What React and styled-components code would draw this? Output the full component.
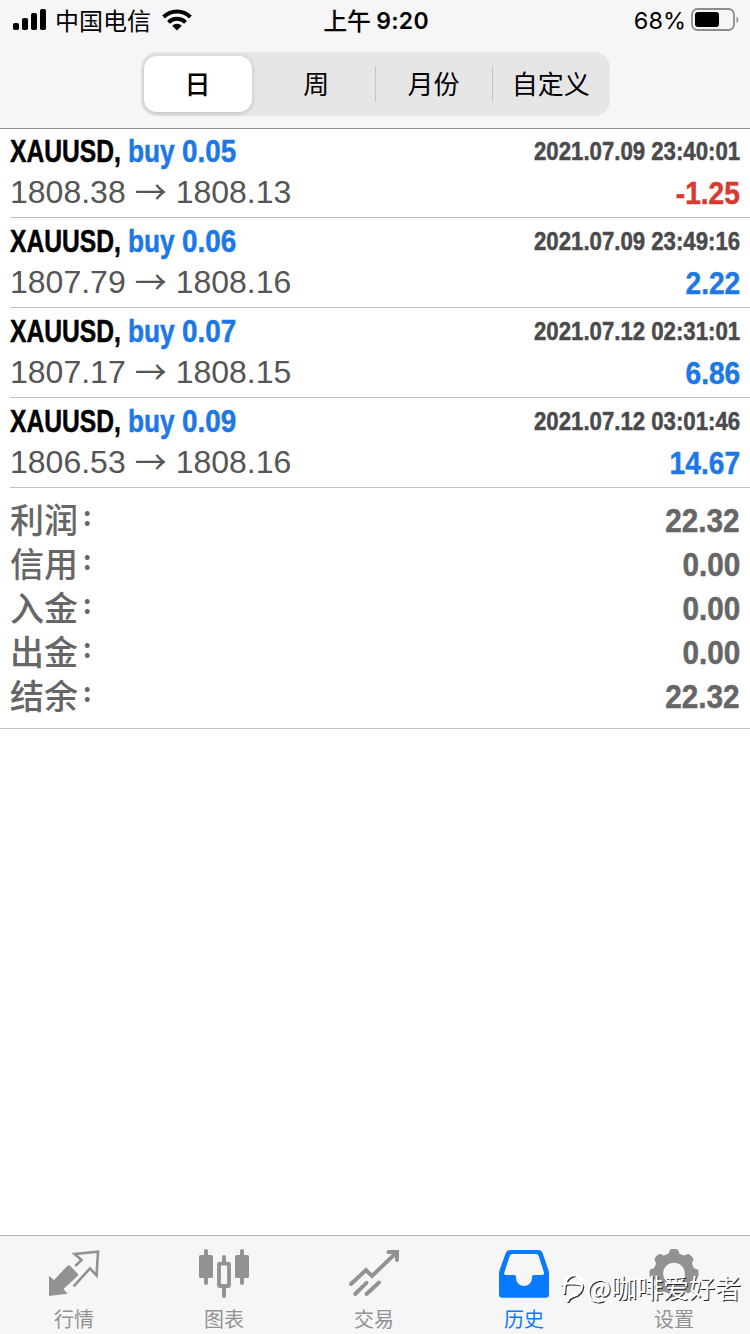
import React from 'react';
import styled, { createGlobalStyle } from 'styled-components';

const deals = [
  { symbol: 'XAUUSD', side: 'buy', volume: '0.05', open: '1808.38', close: '1808.13', time: '2021.07.09 23:40:01', profit: '-1.25' },
  { symbol: 'XAUUSD', side: 'buy', volume: '0.06', open: '1807.79', close: '1808.16', time: '2021.07.09 23:49:16', profit: '2.22' },
  { symbol: 'XAUUSD', side: 'buy', volume: '0.07', open: '1807.17', close: '1808.15', time: '2021.07.12 02:31:01', profit: '6.86' },
  { symbol: 'XAUUSD', side: 'buy', volume: '0.09', open: '1806.53', close: '1808.16', time: '2021.07.12 03:01:46', profit: '14.67' },
];

const totals = [
  ['利润', '22.32'],
  ['信用', '0.00'],
  ['入金', '0.00'],
  ['出金', '0.00'],
  ['结余', '22.32'],
];

const periods = ['日', '周', '月份', '自定义'];

const QuotesIcon = () => (
  <TabIcon viewBox='0 0 54 52'>
    <path d='M2 28L7 32L20.5 17.8Q21.8 16.6 23 17.8L30.6 25.6Q31.6 26.8 30.6 28L16.5 41L20.5 45.8L2 48Z' fill='currentColor' />
    <path d='M28.3 18L34.5 12L27.6 6L51 3.6L49.6 27.4L43 20.4L26.6 38.4' fill='none' stroke='currentColor' strokeWidth='2.6' />
  </TabIcon>
);

const ChartIcon = () => (
  <TabIcon viewBox='0 0 54 52'>
    <path d='M9 3V35M45 3V35M27 9V15M27 40V48' stroke='currentColor' strokeWidth='4' strokeLinecap='round' />
    <rect x='2' y='7' width='14' height='23' rx='1.5' fill='currentColor' />
    <rect x='38' y='7' width='14' height='23' rx='1.5' fill='currentColor' />
    <rect x='22' y='15.7' width='10' height='22.3' rx='0.5' fill='none' stroke='currentColor' strokeWidth='3.8' />
  </TabIcon>
);

const TradeIcon = () => (
  <TabIcon viewBox='0 0 54 52'>
    <g fill='none' stroke='currentColor' strokeWidth='3.9' strokeLinecap='round'>
      <path d='M4 36L19 22L25 28L49.5 4.5' />
      <path d='M8.2 46L19.5 34.8M19.5 46L32 34.5' />
      <path d='M41.5 4H50V12' strokeWidth='4' />
    </g>
  </TabIcon>
);

const HistoryIcon = () => (
  <TabIcon viewBox='0 0 54 52'>
    <path
      fillRule='evenodd'
      fill='currentColor'
      d='M8.8 5Q10 2 13.5 2H41Q44.5 2 45.6 5L51.4 22Q52 24 52 26V46.5Q52 49.8 48.7 49.8H5.3Q2 49.8 2 46.5V26Q2 24 2.6 22Z
         M15.5 6Q13.4 6 12.7 8L7.3 24.5Q6.6 27 9 27H17.5Q19 27 19 29V30A8 8 0 0 0 35 30V29Q35 27 36.5 27H45Q47.6 27 47 24.5L41.7 8Q41 6 39 6Z'
    />
  </TabIcon>
);

const SettingsIcon = () => (
  <TabIcon viewBox='0 0 54 52'>
    <g fill='currentColor'>
      {[0, 45, 90, 135, 180, 225, 270, 315].map(angle => (
        <path key={angle} transform={`rotate(${angle} 27 25.5)`} d='M19.5 8Q22 6 22.4 3.2Q22.8 1 25 1H29Q31.2 1 31.6 3.2Q32 6 34.5 8V12H19.5Z' />
      ))}
      <path fillRule='evenodd' d='M27 5A20.5 20.5 0 1 0 27 46A20.5 20.5 0 1 0 27 5ZM27 14.7A10.8 10.8 0 1 1 27 36.3A10.8 10.8 0 1 1 27 14.7Z' />
    </g>
  </TabIcon>
);

const tabs = [
  { label: '行情', Icon: QuotesIcon },
  { label: '图表', Icon: ChartIcon },
  { label: '交易', Icon: TradeIcon },
  { label: '历史', Icon: HistoryIcon, active: true },
  { label: '设置', Icon: SettingsIcon },
];

const StatusBar = () => (
  <Status>
    <StatusLeft>
      <svg width='34' height='22' viewBox='0 0 34 22'>
        <rect x='0' y='14' width='6' height='7' rx='1.8' />
        <rect x='9' y='9' width='6' height='12' rx='1.8' />
        <rect x='18' y='4' width='6' height='17' rx='1.8' />
        <rect x='27' y='0' width='6' height='21' rx='1.8' />
      </svg>
      <Carrier>中国电信</Carrier>
      <svg width='30' height='22' viewBox='0 0 30 22'>
        <g fill='none' stroke='#000' strokeWidth='4'>
          <path d='M1.6 8A19 19 0 0 1 28.4 8' />
          <path d='M6.5 13.4A12 12 0 0 1 23.5 13.4' />
        </g>
        <path d='M15 21.4L10.2 16.8A6.8 6.8 0 0 1 19.8 16.8Z' />
      </svg>
    </StatusLeft>
    <Clock>上午<Time>9:20</Time></Clock>
    <StatusRight>
      <Percent>68%</Percent>
      <svg width='48' height='24' viewBox='0 0 48 24'>
        <rect x='1' y='1' width='42' height='21' rx='5.5' fill='none' stroke='#8c8c8c' strokeWidth='1.8' />
        <rect x='4' y='4' width='24' height='15' rx='3' />
        <path d='M45.5 8.5Q47.3 9.5 47.3 11.7Q47.3 14 45.5 15Z' fill='#8c8c8c' />
      </svg>
    </StatusRight>
  </Status>
);

const DealRow = ({ deal }) => (
  <Deal>
    <Line>
      <Title>
        <Symbol>{deal.symbol},</Symbol>
        <Side>{deal.side}</Side>
        <Volume>{deal.volume}</Volume>
      </Title>
      <DealTime>{deal.time}</DealTime>
    </Line>
    <Line $low>
      <Prices>
        <span>{deal.open}</span>
        <Arrow>→</Arrow>
        <span>{deal.close}</span>
      </Prices>
      <Profit $loss={deal.profit.startsWith('-')}>{deal.profit}</Profit>
    </Line>
  </Deal>
);

const App = () => {
  return (
    <>
      <GlobalStyle />
      <Screen>
        <Header>
          <StatusBar />
          <Segments>
            {periods.map((period, i) => (
              <Segment key={period} $active={i === 0} $divided={i > 1}>
                {period}
              </Segment>
            ))}
          </Segments>
        </Header>
        <Content>
          {deals.map(deal => (
            <DealRow key={deal.time} deal={deal} />
          ))}
          <Summary>
            {totals.map(([label, value]) => (
              <Total key={label}>
                <TotalLabel>{label}<Colon>:</Colon></TotalLabel>
                <TotalValue>{value}</TotalValue>
              </Total>
            ))}
          </Summary>
        </Content>
        <TabBar>
          {tabs.map(({ label, Icon, active }) => (
            <Tab key={label} $active={active}>
              <Icon />
              {label}
            </Tab>
          ))}
        </TabBar>
        <Watermark>
          <svg width='26' height='32' viewBox='0 0 26 32'>
            <g fill='none' strokeLinecap='round' strokeWidth='2.6'>
              <path d='M4 22Q4 5 14 4M2 13.5Q12 11 21.5 13.5M22 15Q21 23 13 25Q8 27 7.5 30' stroke='#222' transform='translate(1 1)' />
              <path d='M4 22Q4 5 14 4Q19 4 22 9M2 13.5Q12 11 21.5 13.5M22 15Q21 23 13 25Q8 27 7.5 30' stroke='#fff' />
            </g>
          </svg>
          @咖啡爱好者
        </Watermark>
      </Screen>
    </>
  );
};

const GlobalStyle = createGlobalStyle`
  * {
    box-sizing: border-box;
  }

  body {
    margin: 0;
    background: #fff;
    font-family: 'Liberation Sans', 'Noto Sans CJK SC', sans-serif;
  }

  svg {
    display: block;
    flex: none;
  }
`;

const Screen = styled.div`
  position: relative;
  display: flex;
  flex-direction: column;
  width: 750px;
  height: 1334px;
  overflow: hidden;
  background: #fff;
`;

const Header = styled.header`
  position: relative;
  flex: none;
  height: 128px;
  background: #f6f6f6;
  box-shadow: 0 1px 0 #8f8f91;
`;

const Status = styled.div`
  display: grid;
  grid-template-columns: 1fr auto 1fr;
  height: 40px;
  margin-bottom: 12px;
  padding: 0 11px 0 13px;
  color: #000;
  font-family: Inter, 'Noto Sans CJK SC', sans-serif;
  font-size: 24px;
`;

const StatusLeft = styled.div`
  display: flex;
  align-items: center;
`;

const Carrier = styled.span`
  width: 97px;
  margin: 0 10px 0 8px;
  padding-bottom: 2px;
  white-space: nowrap;
`;

const Clock = styled.div`
  display: flex;
  align-items: center;
  padding-bottom: 2px;
  font-weight: 500;
`;

const Time = styled.span`
  margin-left: 5px;
  padding-top: 3px;
  font-weight: 600;
  font-size: 23px;
  letter-spacing: 0.3px;
`;

const StatusRight = styled.div`
  display: flex;
  align-items: center;
  justify-content: flex-end;
`;

const Percent = styled.span`
  margin-right: 5px;
  padding-top: 1px;
  font-size: 23.5px;
`;

const Segments = styled.div`
  display: grid;
  grid-template-columns: repeat(4, 1fr);
  width: 469px;
  height: 64px;
  margin: 0 auto;
  border-radius: 16px;
  background: #e6e6e7;
`;

const Segment = styled.div`
  position: relative;
  display: flex;
  align-items: center;
  justify-content: center;
  margin: ${props => (props.$active ? '4px 6px 4px 3px' : '0')};
  padding-bottom: 3px;
  border-radius: 13px;
  background: ${props => (props.$active ? '#fff' : 'transparent')};
  box-shadow: ${props => (props.$active ? '0 1px 5px rgba(0, 0, 0, 0.2)' : 'none')};
  color: #000;
  font-family: 'Noto Sans CJK SC', sans-serif;
  font-weight: ${props => (props.$active ? 500 : 400)};
  font-size: 26px;

  &::before {
    content: '';
    position: absolute;
    left: 0;
    top: 14px;
    display: ${props => (props.$divided ? 'block' : 'none')};
    width: 1px;
    height: 36px;
    background: #c4c4c6;
  }
`;

const Content = styled.main`
  flex: 1;
`;

const Deal = styled.div`
  height: 90px;
  margin-left: 10px;
  padding: 3px 10px 0 0;
  border-bottom: 1px solid #c0c0c2;
`;

const Line = styled.div`
  display: flex;
  align-items: center;
  justify-content: space-between;
  height: 40px;
  padding-top: ${props => (props.$low ? '2px' : '0')};
`;

/* squeezed bold face for names and amounts */
const Condensed = styled.span`
  font-weight: 700;
  font-size: 32px;
  line-height: 40px;
  white-space: nowrap;
  -webkit-text-stroke: 0.5px currentColor;
`;

const Title = styled.div`
  display: flex;
`;

const Symbol = styled(Condensed)`
  width: 118px;
  color: #000;
  transform: scaleX(0.77);
  transform-origin: left center;
`;

const Side = styled(Condensed)`
  width: 54px;
  color: #1c78e6;
  transform: scaleX(0.82);
  transform-origin: left center;
`;

const Volume = styled(Condensed)`
  color: #1c78e6;
  transform: scaleX(0.87);
  transform-origin: left center;
`;

const DealTime = styled(Condensed)`
  color: #4a4a4c;
  font-size: 25px;
  transform: scaleX(0.888);
  transform-origin: right center;
`;

const Prices = styled.div`
  display: flex;
  align-items: center;
  color: #555;
  font-size: 32px;
  line-height: 38px;
`;

const Arrow = styled.span`
  width: 50px;
  height: 38px;
  font-family: 'Noto Sans CJK SC', sans-serif;
  line-height: 34px;
  text-align: center;
`;

const Profit = styled(Condensed)`
  padding-top: 1px;
  color: ${props => (props.$loss ? '#d93a30' : '#1c78e6')};
  transform: scaleX(0.88);
  transform-origin: right center;
`;

const Summary = styled.section`
  height: 241px;
  padding: 10px 10px 0;
  border-bottom: 1px solid #c0c0c2;
`;

const Total = styled.div`
  display: flex;
  align-items: center;
  justify-content: space-between;
  height: 44px;
  color: #666;
`;

const TotalLabel = styled.span`
  display: flex;
  align-items: center;
  padding-top: 1px;
  font-family: 'Liberation Sans', 'Noto Sans CJK SC', sans-serif;
  font-weight: 500;
  font-size: 34px;
  line-height: 40px;
`;

const Colon = styled.span`
  margin-left: 5px;
  padding-bottom: 12px;
  font-family: 'Noto Sans CJK SC', sans-serif;
  font-weight: 700;
  font-size: 26px;
  line-height: 28px;
`;

const TotalValue = styled(Condensed)`
  padding-top: 1px;
  font-size: 33px;
  transform: scaleX(0.9);
  transform-origin: right center;
`;

const TabBar = styled.nav`
  display: grid;
  grid-template-columns: repeat(5, 1fr);
  flex: none;
  height: 99px;
  border-top: 1px solid #b2b2b3;
  background: #f6f6f6;
`;

const Tab = styled.div`
  display: flex;
  flex-direction: column;
  align-items: center;
  padding: 12px 2px 0 0;
  color: ${props => (props.$active ? '#087aff' : '#929292')};
  font-family: 'Noto Sans CJK SC', sans-serif;
  font-size: 20px;
  line-height: 37px;
`;

const TabIcon = styled.svg`
  width: 54px;
  height: 52px;
`;

const Watermark = styled.div`
  position: absolute;
  right: 9px;
  bottom: 29px;
  display: flex;
  align-items: center;
  color: #fff;
  font-family: 'Noto Sans CJK SC', sans-serif;
  font-size: 26px;
  line-height: 36px;
  text-shadow: 1px 1px 0 #222;
  white-space: nowrap;
`;

export default App;
